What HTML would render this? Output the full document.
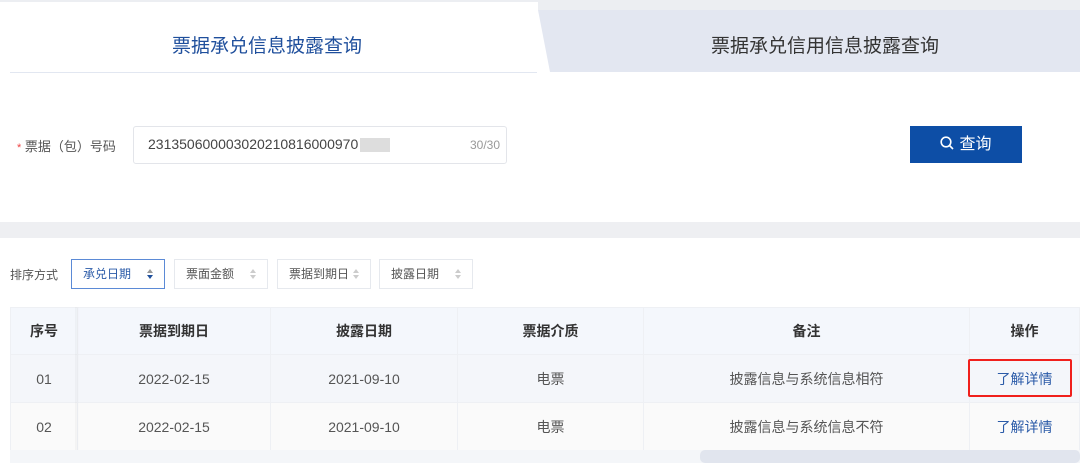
<!DOCTYPE html>
<html><head><meta charset="utf-8"><style>
*{margin:0;padding:0;box-sizing:border-box}
body{width:1080px;height:467px;overflow:hidden;background:#fff;font-family:"Liberation Sans","Noto Sans CJK SC",sans-serif;position:relative;color:#333}
.abs{position:absolute}
.tabtxt{font-size:19px;}
.sort{position:absolute;top:259px;height:30px;border:1px solid #e6e9ee;font-size:12px;color:#555;line-height:28px;padding-left:11px}
.sort .ar{position:absolute;right:10px;top:8px;width:8px;height:12px}
table{border-collapse:collapse;position:absolute;left:10px;top:307px;width:1070px;font-size:14px;color:#555}
td,th{border:1px solid #eef0f4;text-align:center}
th{height:47px;background:#f4f7fc;font-weight:bold;color:#333}
td{height:48px}
tr.r1 td{background:#f4f6fa}
tr.r2 td{background:#fafafa}
a{color:#2b5ba8;text-decoration:none}
</style></head><body>
<div class="abs" style="left:0;top:0;width:1080px;height:2px;background:#eceef2"></div>
<svg class="abs" style="left:0;top:0" width="1080" height="75"><polygon points="538,10 1080,10 1080,72 550,72" fill="#e3e7f1"/><polygon points="538,2 1080,2 1080,10 538,10" fill="#eceef2"/></svg>
<div class="abs" style="left:10px;top:72px;width:527px;height:1px;background:#e2e7f1"></div>
<div class="abs tabtxt" style="left:0;width:534px;top:31px;text-align:center;color:#1f4f9c">票据承兑信息披露查询</div>
<div class="abs tabtxt" style="left:560px;width:530px;top:31px;text-align:center;color:#333">票据承兑信用信息披露查询</div>
<div class="abs" style="left:17px;top:136px;font-size:13px;color:#555"><span style="color:#e44;font-size:11px">*</span> 票据（包）号码</div>
<div class="abs" style="left:133px;top:126px;width:374px;height:38px;border:1px solid #e3e5ea;border-radius:3px"></div>
<div class="abs" style="left:148px;top:136px;font-size:14px;color:#444">231350600003020210816000970</div>
<div class="abs" style="left:360px;top:138px;width:30px;height:14px;background:#ddd"></div>
<div class="abs" style="left:470px;top:138px;font-size:12px;color:#999">30/30</div>
<div class="abs" style="left:910px;top:126px;width:112px;height:37px;background:#0d4ea6;color:#fff;font-size:16px;line-height:37px;text-align:center">
<svg width="14" height="14" style="vertical-align:-1px;margin-right:5px"><circle cx="6" cy="6" r="4.8" stroke="#fff" stroke-width="1.6" fill="none"/><line x1="9.5" y1="9.5" x2="13" y2="13" stroke="#fff" stroke-width="1.6"/></svg>查询</div>
<div class="abs" style="left:0;top:222px;width:1080px;height:16px;background:#eeeff2"></div>
<div class="abs" style="left:10px;top:266px;font-size:12px;color:#555">排序方式</div>
<div class="sort" style="left:71px;width:94px;border-color:#5b8ad6;color:#2b5ba8">承兑日期<svg class="ar" viewBox="0 0 8 12"><path d="M1 5L4 1L7 5Z" fill="#999"/><path d="M1 7L4 11L7 7Z" fill="#1f4f9c"/></svg></div>
<div class="sort" style="left:174px;width:94px">票面金额<svg class="ar" viewBox="0 0 8 12"><path d="M1 5L4 1L7 5Z" fill="#ccc"/><path d="M1 7L4 11L7 7Z" fill="#ccc"/></svg></div>
<div class="sort" style="left:277px;width:94px">票据到期日<svg class="ar" viewBox="0 0 8 12"><path d="M1 5L4 1L7 5Z" fill="#ccc"/><path d="M1 7L4 11L7 7Z" fill="#ccc"/></svg></div>
<div class="sort" style="left:379px;width:94px">披露日期<svg class="ar" viewBox="0 0 8 12"><path d="M1 5L4 1L7 5Z" fill="#ccc"/><path d="M1 7L4 11L7 7Z" fill="#ccc"/></svg></div>
<table>
<tr><th style="width:67px">序号</th><th style="width:193px">票据到期日</th><th style="width:187px">披露日期</th><th style="width:186px">票据介质</th><th style="width:326px">备注</th><th>操作</th></tr>
<tr class="r1"><td>01</td><td>2022-02-15</td><td>2021-09-10</td><td>电票</td><td>披露信息与系统信息相符</td><td><a>了解详情</a></td></tr>
<tr class="r2"><td>02</td><td>2022-02-15</td><td>2021-09-10</td><td>电票</td><td>披露信息与系统信息不符</td><td><a>了解详情</a></td></tr>
</table>
<div class="abs" style="left:75px;top:307px;width:5px;height:143px;background:linear-gradient(90deg,rgba(0,0,0,0.03),rgba(0,0,0,0))"></div>
<div class="abs" style="left:10px;top:450px;width:1070px;height:13px;background:#f4f6f9"></div>
<div class="abs" style="left:700px;top:450px;width:380px;height:13px;background:#e1e5ee;border-radius:5px"></div>
<div class="abs" style="left:968px;top:359px;width:104px;height:38px;border:2px solid #f0201c;border-radius:2px"></div>
</body></html>
